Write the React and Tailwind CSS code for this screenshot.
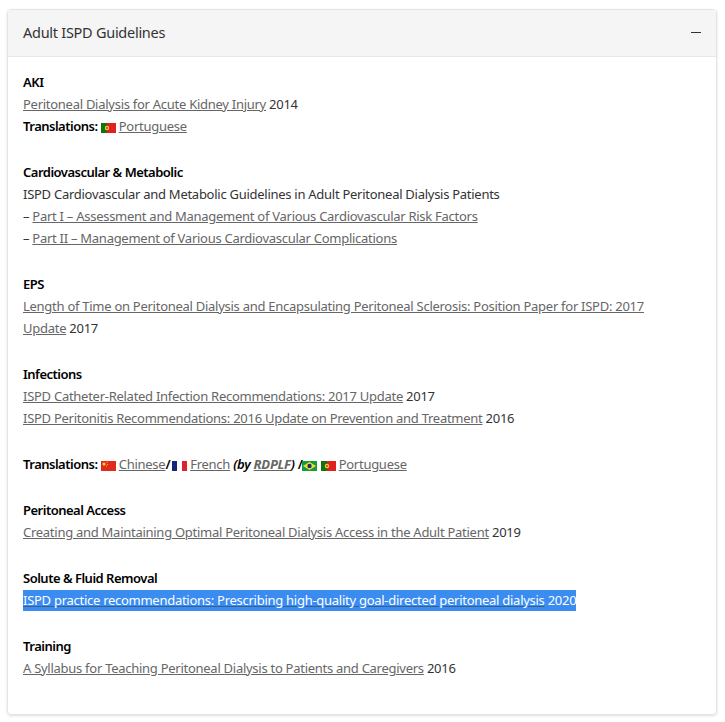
import React from 'react';

const Portugal = () => (
  <svg width="15" height="10" viewBox="0 0 15 10" className="inline-block align-[-2px]">
    <rect width="15" height="10" fill="#e0211d" />
    <rect width="6" height="10" fill="#11740f" />
    <circle cx="6" cy="5" r="2.2" fill="#f4d13a" />
    <circle cx="6" cy="5" r="1" fill="#d8281f" />
  </svg>
);

const Brazil = () => (
  <svg width="15" height="10" viewBox="0 0 15 10" className="inline-block align-[-2px]">
    <rect width="15" height="10" fill="#169b3b" />
    <polygon points="7.5,1 14,5 7.5,9 1,5" fill="#f2dc32" />
    <circle cx="7.5" cy="5" r="2.2" fill="#1c2f7a" />
  </svg>
);

const China = () => (
  <svg width="15" height="10" viewBox="0 0 15 10" className="inline-block align-[-2px]">
    <rect width="15" height="10" fill="#e02a1c" />
    <circle cx="3" cy="3" r="1.5" fill="#f7dc2e" />
    <circle cx="6" cy="1.5" r="0.5" fill="#f7dc2e" />
    <circle cx="6.5" cy="3.5" r="0.5" fill="#f7dc2e" />
    <circle cx="5.5" cy="5" r="0.5" fill="#f7dc2e" />
  </svg>
);

const France = () => (
  <svg width="15" height="10" viewBox="0 0 15 10" className="inline-block align-[-2px] ml-[2px]">
    <rect width="5" height="10" fill="#14277a" />
    <rect x="5" width="5" height="10" fill="#ffffff" />
    <rect x="10" width="5" height="10" fill="#dc2332" />
  </svg>
);

const A = ({ children }) => (
  <a href="#" className="text-[#666666] underline">
    {children}
  </a>
);

const B = ({ children }) => (
  <strong className="font-semibold text-black tracking-[-0.5px]">{children}</strong>
);

const App = () => {
  return (
    <div className="bg-white w-[725px] h-[722px] pt-[9px] px-[7px] font-['Noto_Sans','Open_Sans',sans-serif] text-[13px] tracking-[-0.27px] leading-[22px] text-[#333333]">
      <div className="w-[710px] h-[706px] border border-[#e4e4e4] rounded-[4px] shadow-sm">
        <div className="h-[47px] bg-[#f5f5f5] border-b border-[#e8e8e8] flex items-center justify-between px-[15px]">
          <h4 className="text-[14.5px] text-[#333333] pb-[2px]">Adult ISPD Guidelines</h4>
          <span className="block w-[10px] h-px bg-[#333333] mb-[2px]" />
        </div>

        <div className="pt-[14px] px-[15px]">
          <p className="mb-6">
            <B>AKI</B>
            <br />
            <A>Peritoneal Dialysis for Acute Kidney Injury</A> 2014
            <br />
            <B>Translations:</B> <Portugal /> <A>Portuguese</A>
          </p>

          <p className="mb-6">
            <B>Cardiovascular &amp; Metabolic</B>
            <br />
            ISPD Cardiovascular and Metabolic Guidelines in Adult Peritoneal Dialysis Patients
            <br />
            – <A>Part I – Assessment and Management of Various Cardiovascular Risk Factors</A>
            <br />
            – <A>Part II – Management of Various Cardiovascular Complications</A>
          </p>

          <p className="mb-6">
            <B>EPS</B>
            <br />
            <A>Length of Time on Peritoneal Dialysis and Encapsulating Peritoneal Sclerosis: Position Paper for ISPD: 2017<br />Update</A> 2017
          </p>

          <p className="mb-6">
            <B>Infections</B>
            <br />
            <A>ISPD Catheter-Related Infection Recommendations: 2017 Update</A> 2017
            <br />
            <A>ISPD Peritonitis Recommendations: 2016 Update on Prevention and Treatment</A> 2016
          </p>

          <p className="mb-6">
            <B>Translations:</B> <China /> <A>Chinese</A>
            <B>/</B>
            <France /> <A>French</A>{' '}
            <em className="font-semibold text-black">
              (by <a href="#" className="font-bold text-[#666666] underline">RDPLF</a>)
            </em>{' '}
            <B>/</B>
            <Brazil /> <Portugal /> <A>Portuguese</A>
          </p>

          <p className="mb-6">
            <B>Peritoneal Access</B>
            <br />
            <A>Creating and Maintaining Optimal Peritoneal Dialysis Access in the Adult Patient</A> 2019
          </p>

          <p className="mb-6">
            <B>Solute &amp; Fluid Removal</B>
            <br />
            <span className="bg-[#3a8cf0] text-white pt-[1px] pb-[2px]">
              <a href="#" className="underline decoration-[#35608f]">ISPD practice recommendations: Prescribing high-quality goal-directed peritoneal dialysis</a> 2020
            </span>
          </p>

          <p>
            <B>Training</B>
            <br />
            <A>A Syllabus for Teaching Peritoneal Dialysis to Patients and Caregivers</A> 2016
          </p>
        </div>
      </div>
    </div>
  );
};

export default App;
